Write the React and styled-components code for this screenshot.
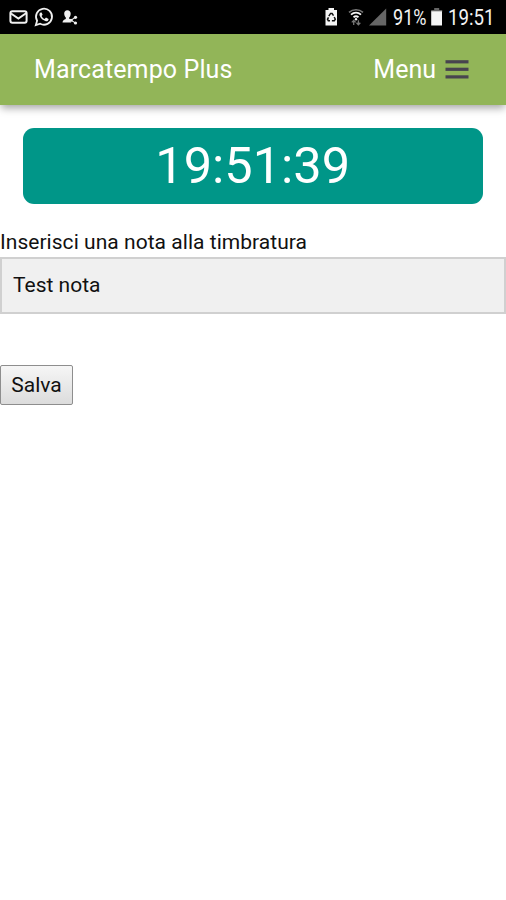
import React from 'react';
import styled, { createGlobalStyle } from 'styled-components';

const GlobalStyle = createGlobalStyle`
  * {
    box-sizing: border-box;
  }

  body {
    margin: 0;
    background: #fff;
    color: #111;
    font-family: Roboto, sans-serif;
  }
`;

const Page = styled.div`
  min-height: 900px;
  overflow: hidden;
`;

const StatusBar = styled.div`
  height: 34px;
  background: #000;
  display: flex;
  justify-content: space-between;
  align-items: center;
`;

const StatusIcons = styled.svg`
  display: block;
  width: ${props => props.$width}px;
  height: 34px;
`;

const StatusRight = styled.div`
  display: flex;
  align-items: center;
  width: 191px;
`;

const StatusText = styled.span`
  width: ${props => props.$width}px;
  flex: none;
  color: #f2f2f2;
  font-size: 21.5px;
  line-height: 34px;
  white-space: nowrap;
  transform: translateY(.5px) scaleX(${props => props.$scale});
  transform-origin: left center;
`;

const Header = styled.header`
  height: 71px;
  padding: 0 37px 0 34px;
  background: #92b558;
  color: #fff;
  font-size: 25px;
  line-height: 71px;
  display: flex;
  justify-content: space-between;
  box-shadow: 0 4px 8px -1px rgba(0, 0, 0, .36);
`;

const Title = styled.div`
  letter-spacing: ${props => props.$spacing || 0}px;
`;

const MenuButton = styled.div`
  display: flex;
  align-items: center;
  gap: 9px;
`;

const MenuIcon = styled.svg`
  display: block;
  width: 24px;
  height: 22px;
`;

const Clock = styled.div`
  height: 76px;
  margin: 23px 23px 0 22.5px;
  border-radius: 11px;
  background: #009688;
  color: #fff;
  font-size: 50.5px;
  line-height: 75px;
  text-align: center;
`;

const Form = styled.form`
  display: flex;
  flex-direction: column;
  align-items: flex-start;
  padding-top: 25px;
`;

const Label = styled.label`
  height: 28px;
  font-size: 21px;
  line-height: 26px;
  letter-spacing: .04px;
`;

const NoteInput = styled.input`
  width: 100%;
  height: 57px;
  border: 2px solid #d0d0d0;
  border-radius: 0;
  padding: 0 11px 1px;
  background: #f0f0f0;
  color: #111;
  font: 21px Roboto, sans-serif;
  outline: none;
`;

const SaveButton = styled.button`
  width: 73px;
  height: 40px;
  margin-top: 51px;
  padding: 0;
  border: 1px solid #8e8e8e;
  border-radius: 2px;
  background: linear-gradient(#f6f6f6, #dcdcdc);
  color: #111;
  font: 21px Roboto, sans-serif;
`;

const Notifications = () => (
  <StatusIcons $width={90} viewBox="0 0 90 34" fill="none" stroke="#f0f0f0">
    <rect x="10.4" y="11.2" width="16.2" height="11.6" rx="2" strokeWidth="2" />
    <path d="M11 13.5l7.4 5 8-5.5" strokeWidth="2" />
    <path d="M35.8 25.2l1.3-4.5a8 8 0 1 1 3.1 3z" strokeWidth="1.8" />
    <path
      d="M40.7 12.4c-1.2.5-1.5 2-1.1 3.2 1 2.8 3.5 5 6.3 5.6 1.5.2 2.7-.8 2.7-2.3l-2.6-1.3-1.4 1.3c-1.5-.7-2.4-1.7-3-3l1-1.2-1-2.3z"
      fill="#f0f0f0"
      stroke="none"
    />
    <path
      d="M67.3 10.2c2.1 0 3.4 1.4 3.4 3.4 0 1.5-.5 3-1.5 4v1.2l1.8.8c-.8 1-.7 1.8.3 2.8h-8.8c.1-2 1.5-2.8 3.3-3.5v-1.3c-1-1-1.6-2.5-1.6-4 0-2 1.2-3.4 3.1-3.4z"
      fill="#f0f0f0"
      stroke="none"
    />
    <path d="M75.3 17.4l-4.3 2.8 4.3 2.7" strokeWidth="1.1" />
    <g fill="#f0f0f0" stroke="none">
      <circle cx="75.5" cy="17.3" r="1.6" />
      <circle cx="71" cy="20.2" r="1.5" />
      <circle cx="75.5" cy="23" r="1.6" />
    </g>
  </StatusIcons>
);

const SystemIcons = () => (
  <StatusIcons $width={78} viewBox="0 0 78 34" fill="none">
    <path d="M10.5 10h3V8h5.5v2h3v15.5H10.5z" fill="#f5f5f5" />
    <g stroke="#111" strokeWidth="1.5">
      <path d="M13.8 16.2l1.8-2.8h1.5l1.4 2.2M19.2 17l1.1 2.2-1 1.5h-2.4M15 20.7h-1.7l-.8-1.4 1-2" />
    </g>
    <path d="M34 12.4c4-3.6 10-3.6 14 0" stroke="#777" strokeWidth="1.6" />
    <path d="M36 14.7c3-2.7 7-2.7 10 0M38.5 17.2c1.7-1.3 3.3-1.3 5 0" stroke="#f5f5f5" strokeWidth="1.8" />
    <circle cx="41" cy="19.2" r="1.2" fill="#f5f5f5" />
    <path d="M38.7 25v-4.6M36.8 22.4l1.9-2 1.9 2M43.4 20.3v4.4M41.5 22.8l1.9 2 1.9-2" stroke="#777" strokeWidth="1.3" />
    <path d="M71.2 8.5v17H54z" fill="#666" />
  </StatusIcons>
);

const Battery = () => (
  <StatusIcons $width={21} viewBox="0 0 21 34">
    <path d="M7.2 8h5v2h3v2H4.2v-2h3z" fill="#666" />
    <path d="M4.2 11.3h10.8v14.2H4.2z" fill="#f5f5f5" />
  </StatusIcons>
);

const App = () => (
  <Page>
    <GlobalStyle />
    <StatusBar>
      <Notifications />
      <StatusRight>
        <SystemIcons />
        <StatusText $width={34} $scale={0.84}>91%</StatusText>
        <Battery />
        <StatusText $width={58} $scale={0.87}>19:51</StatusText>
      </StatusRight>
    </StatusBar>
    <Header>
      <Title $spacing={0.12}>Marcatempo Plus</Title>
      <MenuButton>
        <span>Menu</span>
        <MenuIcon viewBox="0 0 24 22" fill="#48444f">
          <rect x="0.5" y="1.2" width="23" height="3.2" />
          <rect x="0.5" y="8.7" width="23" height="3.2" />
          <rect x="0.5" y="16.3" width="23" height="3.2" />
        </MenuIcon>
      </MenuButton>
    </Header>
    <Clock>19:51:39</Clock>
    <Form>
      <Label htmlFor="nota">Inserisci una nota alla timbratura</Label>
      <NoteInput id="nota" defaultValue="Test nota" />
      <SaveButton type="button">Salva</SaveButton>
    </Form>
  </Page>
);

export default App;
